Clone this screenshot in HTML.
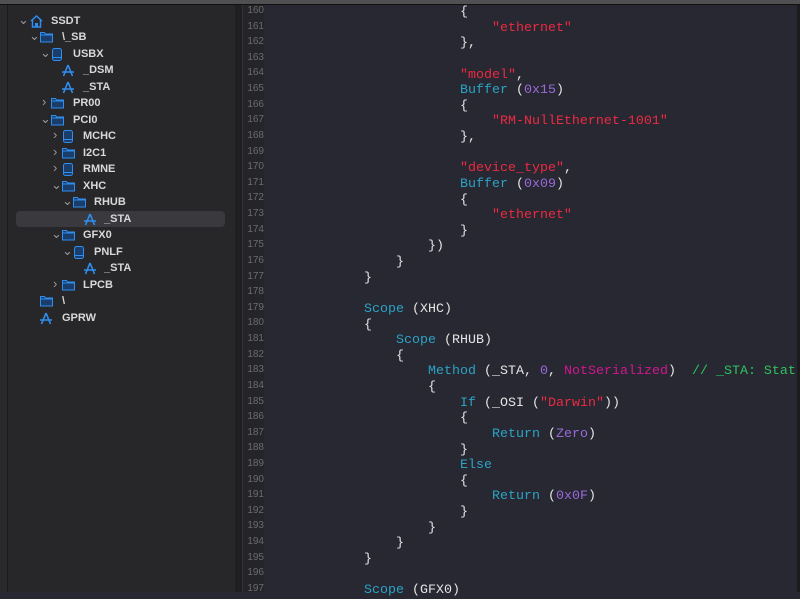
<!DOCTYPE html>
<html><head><meta charset="utf-8"><style>
body{margin:0;width:800px;height:592px;overflow:hidden;background:#282833;position:relative;font-family:"Liberation Sans",sans-serif}
#top{position:absolute;left:0;top:0;width:800px;height:4px;background:#505052;border-bottom:1px solid #111}
#ls{position:absolute;left:0;top:5px;width:7px;height:587px;background:#2a2a2c;border-right:1px solid #1a1a1a}
#sb{position:absolute;left:8px;top:5px;width:227px;height:587px;background:#27272a}
#div{position:absolute;left:235px;top:5px;width:7px;height:587px;background:#1f1f22;border-right:1px solid #333}
#gut{position:absolute;left:243px;top:5px;width:21px;height:587px;background:#242429}
.r{position:absolute;height:16px;line-height:16px;font-size:11px;font-weight:bold;color:#d8d8d8;white-space:nowrap}
.r svg{position:absolute;top:2px}
.ch{position:absolute;top:-1px;color:#999;font-size:13px;font-weight:normal}
.hl{position:absolute;left:16px;top:211px;width:209px;height:16px;background:#3a3a3e;border-radius:4px}
.ln{position:absolute;left:243px;width:21px;text-align:right;font-size:10px;color:#6c6c70;font-family:"Liberation Sans",sans-serif;line-height:15.62px;height:15.62px}
pre{position:absolute;left:268px;top:5px;margin:0;font-family:"Liberation Mono",monospace;font-size:13.33px;line-height:15.62px;color:#e4e4e4}
.k{color:#2ba3c4}.s{color:#ec2a40}.n{color:#9a6ad8}.m{color:#d1168f}.c{color:#2fc25c}
</style></head><body>
<div id="top"></div><div id="ls"></div><div id="sb"></div><div id="div"></div><div id="gut"></div>
<div class="hl"></div>
<svg width="0" height="0" style="position:absolute"><defs>
<g id="fo"><path d="M0.5 1.5h4l1 1.5h7v8h-12z" fill="#1a3d6a" stroke="#2f8ef0" stroke-width="1"/><path d="M0.5 4h12" stroke="#2f8ef0"/></g>
<g id="dr"><rect x="0.5" y="0.5" width="9" height="12" rx="2" fill="#1a3d6a" stroke="#2f8ef0"/><path d="M1 9.5h8" stroke="#2f8ef0"/></g>
<g id="me"><path d="M6 1L1.5 12M6 1L10.5 12M0 8h12" stroke="#2f8ef0" stroke-width="1.6" fill="none"/></g>
<g id="ho"><path d="M1 6L6.5 1L12 6M2.5 5v7h8V5" stroke="#2f8ef0" stroke-width="1.5" fill="none"/><rect x="5" y="8" width="3" height="4" fill="#2f8ef0"/></g>
</defs></svg>
<div class="r" style="left:18px;top:13px"><span class="ch">⌄</span><svg width="13" height="13" style="left:12px"><use href="#ho"/></svg><span style="position:absolute;left:33px">SSDT</span></div>
<div class="r" style="left:29px;top:29px"><span class="ch">⌄</span><svg width="13" height="12" style="left:11px"><use href="#fo"/></svg><span style="position:absolute;left:33px">\_SB</span></div>
<div class="r" style="left:40px;top:46px"><span class="ch">⌄</span><svg width="11" height="13" style="left:12px"><use href="#dr"/></svg><span style="position:absolute;left:33px">USBX</span></div>
<div class="r" style="left:62px;top:62px"><svg width="13" height="13" style="left:0"><use href="#me"/></svg><span style="position:absolute;left:21px">_DSM</span></div>
<div class="r" style="left:62px;top:79px"><svg width="13" height="13" style="left:0"><use href="#me"/></svg><span style="position:absolute;left:21px">_STA</span></div>
<div class="r" style="left:42px;top:95px"><span class="ch">›</span><svg width="13" height="12" style="left:9px"><use href="#fo"/></svg><span style="position:absolute;left:31px">PR00</span></div>
<div class="r" style="left:40px;top:112px"><span class="ch">⌄</span><svg width="13" height="12" style="left:11px"><use href="#fo"/></svg><span style="position:absolute;left:33px">PCI0</span></div>
<div class="r" style="left:53px;top:128px"><span class="ch">›</span><svg width="11" height="13" style="left:10px"><use href="#dr"/></svg><span style="position:absolute;left:30px">MCHC</span></div>
<div class="r" style="left:53px;top:145px"><span class="ch">›</span><svg width="13" height="12" style="left:9px"><use href="#fo"/></svg><span style="position:absolute;left:30px">I2C1</span></div>
<div class="r" style="left:53px;top:161px"><span class="ch">›</span><svg width="11" height="13" style="left:10px"><use href="#dr"/></svg><span style="position:absolute;left:30px">RMNE</span></div>
<div class="r" style="left:51px;top:178px"><span class="ch">⌄</span><svg width="13" height="12" style="left:11px"><use href="#fo"/></svg><span style="position:absolute;left:32px">XHC</span></div>
<div class="r" style="left:62px;top:194px"><span class="ch">⌄</span><svg width="13" height="12" style="left:11px"><use href="#fo"/></svg><span style="position:absolute;left:32px">RHUB</span></div>
<div class="r" style="left:84px;top:211px"><svg width="13" height="13" style="left:0"><use href="#me"/></svg><span style="position:absolute;left:20px">_STA</span></div>
<div class="r" style="left:51px;top:227px"><span class="ch">⌄</span><svg width="13" height="12" style="left:11px"><use href="#fo"/></svg><span style="position:absolute;left:32px">GFX0</span></div>
<div class="r" style="left:62px;top:244px"><span class="ch">⌄</span><svg width="11" height="13" style="left:12px"><use href="#dr"/></svg><span style="position:absolute;left:32px">PNLF</span></div>
<div class="r" style="left:84px;top:260px"><svg width="13" height="13" style="left:0"><use href="#me"/></svg><span style="position:absolute;left:20px">_STA</span></div>
<div class="r" style="left:53px;top:277px"><span class="ch">›</span><svg width="13" height="12" style="left:9px"><use href="#fo"/></svg><span style="position:absolute;left:30px">LPCB</span></div>
<div class="r" style="left:40px;top:293px"><svg width="13" height="12" style="left:0"><use href="#fo"/></svg><span style="position:absolute;left:22px">\</span></div>
<div class="r" style="left:40px;top:310px"><svg width="13" height="13" style="left:0"><use href="#me"/></svg><span style="position:absolute;left:22px">GPRW</span></div>
<div style="position:absolute;left:0;top:3px">
<div class="ln" style="top:0">160</div><div class="ln" style="top:15.62px">161</div><div class="ln" style="top:31.24px">162</div><div class="ln" style="top:46.86px">163</div><div class="ln" style="top:62.48px">164</div><div class="ln" style="top:78.1px">165</div><div class="ln" style="top:93.72px">166</div><div class="ln" style="top:109.34px">167</div><div class="ln" style="top:124.96px">168</div><div class="ln" style="top:140.58px">169</div><div class="ln" style="top:156.2px">170</div><div class="ln" style="top:171.82px">171</div><div class="ln" style="top:187.44px">172</div><div class="ln" style="top:203.06px">173</div><div class="ln" style="top:218.68px">174</div><div class="ln" style="top:234.3px">175</div><div class="ln" style="top:249.92px">176</div><div class="ln" style="top:265.54px">177</div><div class="ln" style="top:281.16px">178</div><div class="ln" style="top:296.78px">179</div><div class="ln" style="top:312.4px">180</div><div class="ln" style="top:328.02px">181</div><div class="ln" style="top:343.64px">182</div><div class="ln" style="top:359.26px">183</div><div class="ln" style="top:374.88px">184</div><div class="ln" style="top:390.5px">185</div><div class="ln" style="top:406.12px">186</div><div class="ln" style="top:421.74px">187</div><div class="ln" style="top:437.36px">188</div><div class="ln" style="top:452.98px">189</div><div class="ln" style="top:468.6px">190</div><div class="ln" style="top:484.22px">191</div><div class="ln" style="top:499.84px">192</div><div class="ln" style="top:515.46px">193</div><div class="ln" style="top:531.08px">194</div><div class="ln" style="top:546.7px">195</div><div class="ln" style="top:562.32px">196</div><div class="ln" style="top:577.94px">197</div>
</div>
<pre>                        {
                            <span class="s">"ethernet"</span>
                        },

                        <span class="s">"model"</span>,
                        <span class="k">Buffer</span> (<span class="n">0x15</span>)
                        {
                            <span class="s">"RM-NullEthernet-1001"</span>
                        },

                        <span class="s">"device_type"</span>,
                        <span class="k">Buffer</span> (<span class="n">0x09</span>)
                        {
                            <span class="s">"ethernet"</span>
                        }
                    })
                }
            }

            <span class="k">Scope</span> (XHC)
            {
                <span class="k">Scope</span> (RHUB)
                {
                    <span class="k">Method</span> (_STA, <span class="n">0</span>, <span class="m">NotSerialized</span>)  <span class="c">// _STA: Status</span>
                    {
                        <span class="k">If</span> (_OSI (<span class="s">"Darwin"</span>))
                        {
                            <span class="k">Return</span> (<span class="n">Zero</span>)
                        }
                        <span class="k">Else</span>
                        {
                            <span class="k">Return</span> (<span class="n">0x0F</span>)
                        }
                    }
                }
            }

            <span class="k">Scope</span> (GFX0)</pre>
<div style="position:absolute;left:797px;top:5px;width:3px;height:587px;background:#1c1c1e"></div>
</body></html>
